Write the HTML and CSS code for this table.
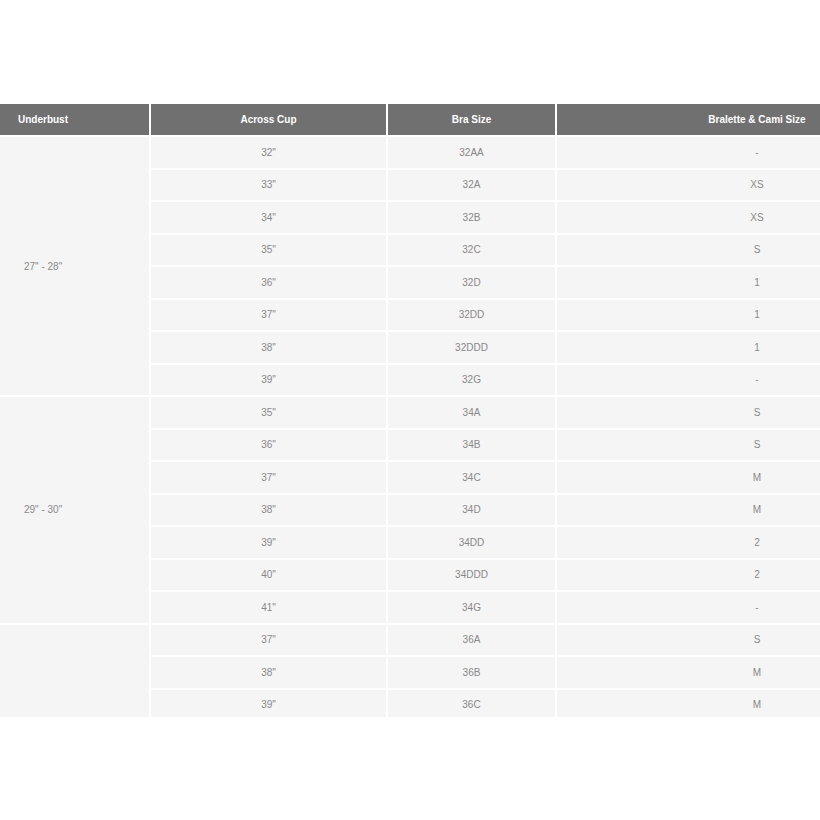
FILE: index.html
```html
<!DOCTYPE html>
<html>
<head>
<meta charset="utf-8">
<link rel="stylesheet" href="styles.css">
</head>
<body>
<div class="wrap">
<table class="chart">
<colgroup><col class="c1"><col class="c2"><col class="c3"><col class="c4"></colgroup>
<thead>
<tr><th class="first">Underbust</th><th>Across Cup</th><th>Bra Size</th><th>Bralette &amp; Cami Size</th></tr>
</thead>
<tbody>
<tr><td class="first" rowspan="8">27" - 28"</td><td>32"</td><td>32AA</td><td>-</td></tr>
<tr><td>33"</td><td>32A</td><td>XS</td></tr>
<tr><td>34"</td><td>32B</td><td>XS</td></tr>
<tr><td>35"</td><td>32C</td><td>S</td></tr>
<tr><td>36"</td><td>32D</td><td>1</td></tr>
<tr><td>37"</td><td>32DD</td><td>1</td></tr>
<tr><td>38"</td><td>32DDD</td><td>1</td></tr>
<tr><td>39"</td><td>32G</td><td>-</td></tr>
<tr><td class="first" rowspan="7">29" - 30"</td><td>35"</td><td>34A</td><td>S</td></tr>
<tr><td>36"</td><td>34B</td><td>S</td></tr>
<tr><td>37"</td><td>34C</td><td>M</td></tr>
<tr><td>38"</td><td>34D</td><td>M</td></tr>
<tr><td>39"</td><td>34DD</td><td>2</td></tr>
<tr><td>40"</td><td>34DDD</td><td>2</td></tr>
<tr><td>41"</td><td>34G</td><td>-</td></tr>
<tr><td class="first" rowspan="3"></td><td>37"</td><td>36A</td><td>S</td></tr>
<tr><td>38"</td><td>36B</td><td>M</td></tr>
<tr><td>39"</td><td>36C</td><td>M</td></tr>
</tbody>
</table>
</div>
</body>
</html>
```
FILE: styles.css
```css
html, body {
  margin: 0;
  padding: 0;
  background: #ffffff;
  overflow: hidden;
}
.wrap {
  margin-top: 103px;
  width: 820px;
  height: 614px;
  overflow: hidden;
}
.chart {
  width: 958px;
  table-layout: fixed;
  border-collapse: collapse;
  font-family: "Liberation Sans", Arial, sans-serif;
  font-size: 10px;
}
.c1 { width: 150px; }
.c2 { width: 237px; }
.c3 { width: 169px; }
.c4 { width: 402px; }
.chart th {
  background: #707070;
  color: #ffffff;
  font-weight: bold;
  height: 31px;
  padding: 0;
  text-align: center;
  border: 2px solid #ffffff;
  border-top: 1px solid #ffffff;
}
.chart th.first {
  text-align: left;
  padding-left: 18px;
}
.chart td {
  background: #f5f5f5;
  color: #888888;
  height: 30.5px;
  padding: 0;
  text-align: center;
  border: 2px solid #ffffff;
}
.chart td.first {
  text-align: left;
  padding-left: 24px;
}
.chart tr > :first-child { border-left: 0; }
```
